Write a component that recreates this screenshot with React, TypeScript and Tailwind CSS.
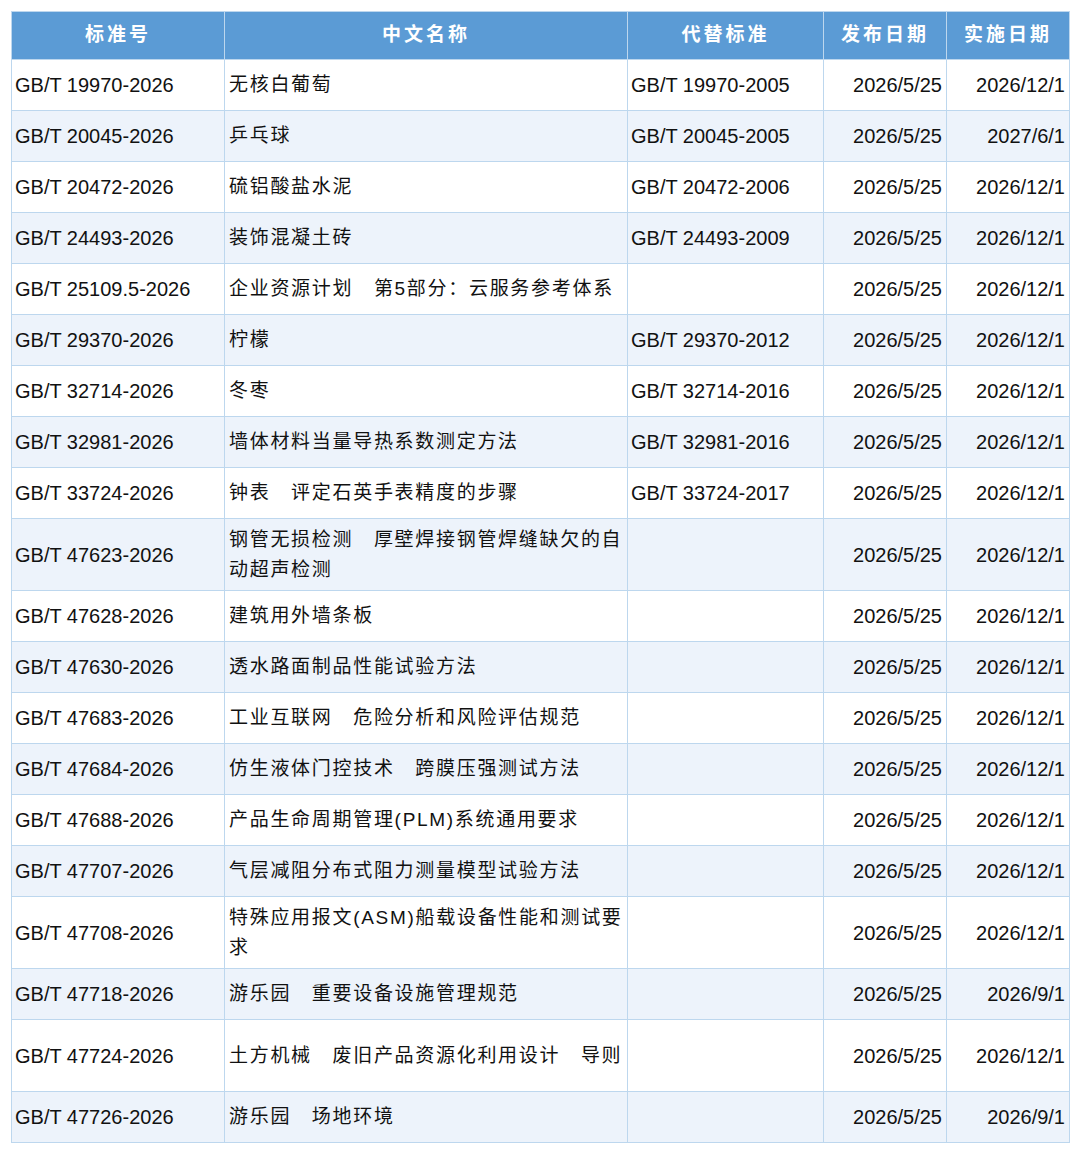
const rows: [string, string, string, string, string, boolean?][] = [
  ["GB/T 19970-2026", "无核白葡萄", "GB/T 19970-2005", "2026/5/25", "2026/12/1"],
  ["GB/T 20045-2026", "乒乓球", "GB/T 20045-2005", "2026/5/25", "2027/6/1"],
  ["GB/T 20472-2026", "硫铝酸盐水泥", "GB/T 20472-2006", "2026/5/25", "2026/12/1"],
  ["GB/T 24493-2026", "装饰混凝土砖", "GB/T 24493-2009", "2026/5/25", "2026/12/1"],
  ["GB/T 25109.5-2026", "企业资源计划　第5部分：云服务参考体系", "", "2026/5/25", "2026/12/1"],
  ["GB/T 29370-2026", "柠檬", "GB/T 29370-2012", "2026/5/25", "2026/12/1"],
  ["GB/T 32714-2026", "冬枣", "GB/T 32714-2016", "2026/5/25", "2026/12/1"],
  ["GB/T 32981-2026", "墙体材料当量导热系数测定方法", "GB/T 32981-2016", "2026/5/25", "2026/12/1"],
  ["GB/T 33724-2026", "钟表　评定石英手表精度的步骤", "GB/T 33724-2017", "2026/5/25", "2026/12/1"],
  ["GB/T 47623-2026", "钢管无损检测　厚壁焊接钢管焊缝缺欠的自动超声检测", "", "2026/5/25", "2026/12/1", true],
  ["GB/T 47628-2026", "建筑用外墙条板", "", "2026/5/25", "2026/12/1"],
  ["GB/T 47630-2026", "透水路面制品性能试验方法", "", "2026/5/25", "2026/12/1"],
  ["GB/T 47683-2026", "工业互联网　危险分析和风险评估规范", "", "2026/5/25", "2026/12/1"],
  ["GB/T 47684-2026", "仿生液体门控技术　跨膜压强测试方法", "", "2026/5/25", "2026/12/1"],
  ["GB/T 47688-2026", "产品生命周期管理(PLM)系统通用要求", "", "2026/5/25", "2026/12/1"],
  ["GB/T 47707-2026", "气层减阻分布式阻力测量模型试验方法", "", "2026/5/25", "2026/12/1"],
  ["GB/T 47708-2026", "特殊应用报文(ASM)船载设备性能和测试要求", "", "2026/5/25", "2026/12/1", true],
  ["GB/T 47718-2026", "游乐园　重要设备设施管理规范", "", "2026/5/25", "2026/9/1"],
  ["GB/T 47724-2026", "土方机械　废旧产品资源化利用设计　导则", "", "2026/5/25", "2026/12/1", true],
  ["GB/T 47726-2026", "游乐园　场地环境", "", "2026/5/25", "2026/9/1"],
];

export default function App() {
  return (
    <div className="w-[1080px] h-[1158px] bg-white pt-[11px] pl-[11px]" style={{ fontFamily: '"Liberation Sans", "Noto Sans CJK SC", sans-serif' }}>
      <table className="border-collapse table-fixed w-[1058px] text-[20px] text-[#111]">
        <colgroup>
          <col className="w-[213px]" />
          <col className="w-[403px]" />
          <col className="w-[196px]" />
          <col className="w-[123px]" />
          <col className="w-[123px]" />
        </colgroup>
        <thead>
          <tr className="h-[48px] bg-[#5b9bd5] text-white">
            {["标准号", "中文名称", "代替标准", "发布日期", "实施日期"].map((h) => (
              <th key={h} className="border border-[#bdd7ee] font-bold text-[19px] tracking-[3px] text-center">{h}</th>
            ))}
          </tr>
        </thead>
        <tbody>
          {rows.map((r, i) => (
            <tr key={r[0]} className={`${r[5] ? "h-[72px]" : "h-[51px]"} ${i % 2 ? "bg-[#edf3fb]" : "bg-white"}`}>
              <td className="border border-[#bdd7ee] pl-[3px] whitespace-nowrap">{r[0]}</td>
              <td className="border border-[#bdd7ee] pl-[4px] pr-0 text-[19px] tracking-[1.7px] leading-[30px]">{r[1]}</td>
              <td className="border border-[#bdd7ee] pl-[3px] whitespace-nowrap">{r[2]}</td>
              <td className="border border-[#bdd7ee] pr-[4px] text-right">{r[3]}</td>
              <td className="border border-[#bdd7ee] pr-[4px] text-right">{r[4]}</td>
            </tr>
          ))}
        </tbody>
      </table>
    </div>
  );
}
